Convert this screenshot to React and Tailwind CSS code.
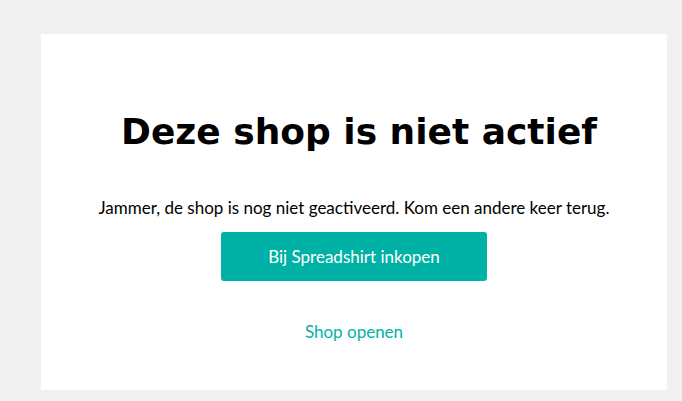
export default function App() {
  return (
    <div className="min-h-[401px] bg-[#f0f0f0] pt-[34px] pl-[41px] pr-[15px] pb-[11px]">
      <div className="w-[626px] h-[356px] bg-white flex flex-col items-center text-center">
        <h1 className="mt-[76px] pl-[10px] text-[36px] leading-[44px] font-bold text-black font-['DejaVu_Sans',sans-serif]">
          Deze shop is niet actief
        </h1>
        <p className="mt-[43px] text-[17px] leading-[21px] text-black font-['Lato',sans-serif]">
          Jammer, de shop is nog niet geactiveerd. Kom een andere keer terug.
        </p>
        <a
          href="#"
          className="mt-[14px] w-[266px] h-[49px] flex items-center justify-center rounded-[3px] bg-[#00b2a5] text-white text-[17px] font-['Lato',sans-serif]"
        >
          Bij Spreadshirt inkopen
        </a>
        <a href="#" className="mt-[38px] text-[17px] text-[#00b2a5] font-['Lato',sans-serif]">
          Shop openen
        </a>
      </div>
    </div>
  )
}
